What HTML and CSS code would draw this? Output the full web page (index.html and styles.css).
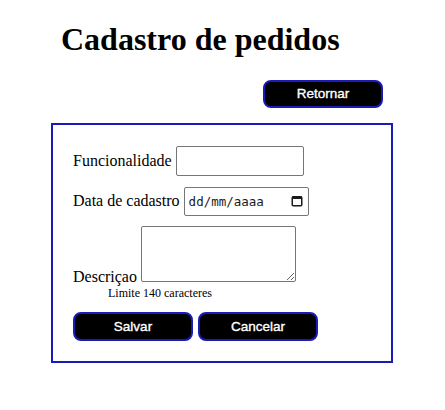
FILE: index.html
```html
<!DOCTYPE html>
<html lang="pt-BR">
<head>
<meta charset="utf-8">
<title>Cadastro de pedidos</title>
<link rel="stylesheet" href="styles.css">
</head>
<body>
<div class="page">
  <h1 class="title">Cadastro de pedidos</h1>
  <div class="actions">
    <button class="btn btn-top" type="button">Retornar</button>
  </div>
  <form class="card">
    <div class="row row-1">
      <label for="func">Funcionalidade</label>
      <input id="func" class="field field-text" type="text">
    </div>
    <div class="row row-2">
      <label for="data">Data de cadastro</label>
      <span class="field field-date">
        <input id="data" class="date-text" type="text" placeholder="dd/mm/aaaa">
        <svg class="cal" width="12" height="12" viewBox="0 0 12 12" aria-hidden="true">
          <rect x="1.25" y="1.75" width="9.5" height="9" rx="1" fill="none" stroke="#1b1b1b" stroke-width="1.5"/>
          <rect x="1" y="1.5" width="10" height="2.5" fill="#1b1b1b"/>
        </svg>
      </span>
    </div>
    <div class="row-3">
      <label for="desc">Descriçao</label>
      <textarea id="desc" class="field field-area"></textarea>
    </div>
    <div class="hint">Limite 140 caracteres</div>
    <div class="buttons">
      <button class="btn" type="submit">Salvar</button>
      <button class="btn" type="reset">Cancelar</button>
    </div>
  </form>
</div>
</body>
</html>
```
FILE: styles.css
```css
html, body {
  margin: 0;
  padding: 0;
  background: #ffffff;
}

body {
  font-family: "Liberation Serif", "Times New Roman", serif;
  font-size: 16px;
  color: #000000;
}

.page {
  width: 342px;
  margin: 0 0 0 51px;
}

.title {
  font-size: 32px;
  font-weight: bold;
  margin: 21.44px 0 21.44px 10px;
}

.actions {
  display: flex;
  justify-content: flex-end;
  padding-right: 10px;
}

.btn {
  box-sizing: border-box;
  width: 120px;
  height: 29px;
  background: #000000;
  color: #ffffff;
  border: 2px solid #1a1ab8;
  border-radius: 8px;
  font-family: "Liberation Sans", Arial, sans-serif;
  font-size: 13.5px;
  font-weight: normal;
  -webkit-text-stroke: 0.35px #ffffff;
  padding: 0;
  margin: 0;
  cursor: pointer;
}

.btn-top {
  height: 28px;
}

.card {
  box-sizing: border-box;
  margin: 15px 0 0 0;
  border: 2px solid #1a1ab8;
  padding: 21px 20px 20px 20px;
}

.row {
  display: flex;
  align-items: center;
  gap: 4px;
}

.row-1 {
  margin-bottom: 11px;
}

.row-2 {
  margin-bottom: 10px;
}

.field {
  box-sizing: border-box;
  border: 1px solid #767676;
  border-radius: 2px;
  background: #ffffff;
  margin: 0;
}

.field-text {
  width: 128px;
  height: 30px;
  padding: 1px 3px;
  font-size: 13px;
}

.field-date {
  display: flex;
  align-items: center;
  width: 125px;
  height: 29px;
  padding: 0 4px 0 4px;
}

.date-text {
  flex: 1;
  min-width: 0;
  border: 0;
  outline: none;
  padding: 0;
  margin: 0;
  background: transparent;
  font-family: "DejaVu Sans Mono", "Liberation Mono", monospace;
  font-size: 12.5px;
  color: #000000;
}

.date-text::placeholder {
  color: #1a1a1a;
  opacity: 1;
}

.cal {
  display: block;
  flex: none;
  margin-right: 1px;
}

.field-area {
  width: 155px;
  height: 56px;
  padding: 2px;
  font-size: 13px;
  vertical-align: baseline;
}

.hint {
  font-size: 12px;
  margin-left: 35px;
}

.buttons {
  display: flex;
  gap: 5px;
  margin-top: 11px;
}
```
